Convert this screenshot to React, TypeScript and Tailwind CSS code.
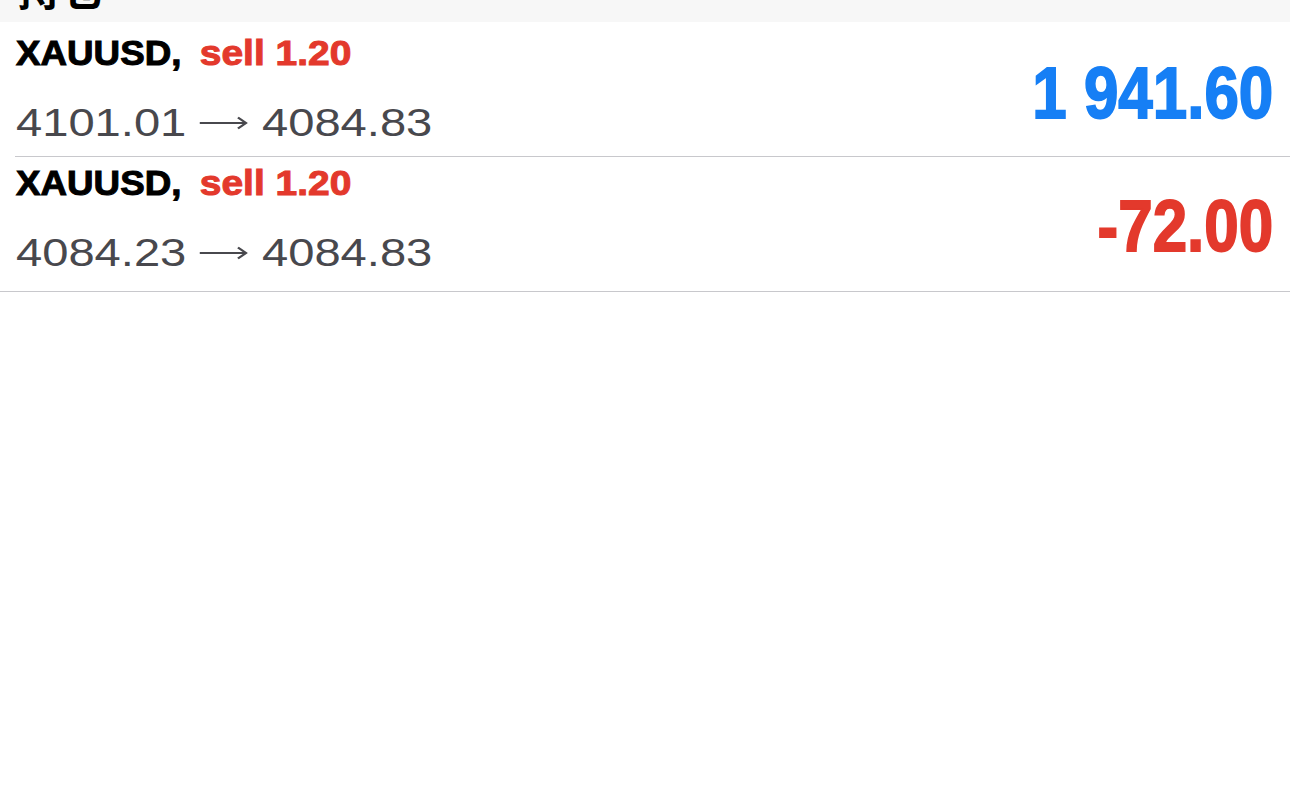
import React from "react";

const rows = [
  { from: "4101.01", to: "4084.83", profit: "1 941.60", pos: true, inset: true, pt: "pt-[11px]", mt: "mt-[31px]" },
  { from: "4084.23", to: "4084.83", profit: "-72.00", pos: false, inset: false, pt: "pt-[6px]", mt: "mt-[29px]" },
];

function Arrow() {
  return (
    <svg width="39" height="14" viewBox="0 0 39 14" className="inline-block align-baseline mx-[11px] mb-[6px]" fill="none" stroke="#48484d" strokeWidth="2" strokeLinecap="butt">
      <path d="M0 7 H37" />
      <path d="M31 1.5 L37.5 7 L31 12.5" strokeLinejoin="miter" />
    </svg>
  );
}

export default function App() {
  return (
    <div className="w-[1290px] h-[811px] bg-white overflow-hidden" style={{ fontFamily: '"Liberation Sans", "DejaVu Sans", Arial, sans-serif' }}>
      <div className="h-[22px] bg-[#f7f7f7] overflow-hidden pl-[17px]">
        <div
          className="mt-[-33px] text-[42px] leading-[42px] font-bold text-black origin-left scale-x-[1.05]"
          style={{ fontFamily: '"Noto Sans CJK SC", sans-serif' }}
        >
          持仓
        </div>
      </div>
      {rows.map((r, i) => (
        <div key={i} className={r.inset ? "pl-[15px]" : ""}>
          <div className={`flex items-start justify-between h-[135px] pr-[17px] border-b border-[#c8c8cc] ${r.inset ? "pl-[1px]" : "pl-[16px]"}`}>
            <div className={`flex flex-col ${r.pt}`}>
              <div className="text-[35px] leading-[40px] font-bold whitespace-nowrap origin-left scale-x-[1.05] [-webkit-text-stroke:1px_currentColor]">
                <span className="text-black">XAUUSD,</span>
                <span className="inline-block text-[#e3392c] ml-[17px] origin-left scale-x-[1.06]">sell 1.20</span>
              </div>
              <div className="mt-[30px] text-[38px] leading-[40px] text-[#48484d] whitespace-nowrap origin-left scale-x-[1.24]">
                <span>{r.from}</span>
                <Arrow />
                <span>{r.to}</span>
              </div>
            </div>
            <div
              className={`${r.mt} text-[72px] leading-[80px] font-bold whitespace-nowrap origin-right scale-x-[0.86] [-webkit-text-stroke:1.8px_currentColor] ${r.pos ? "text-[#167ff5]" : "text-[#e3392c]"}`}
            >
              {r.profit}
            </div>
          </div>
        </div>
      ))}
    </div>
  );
}
